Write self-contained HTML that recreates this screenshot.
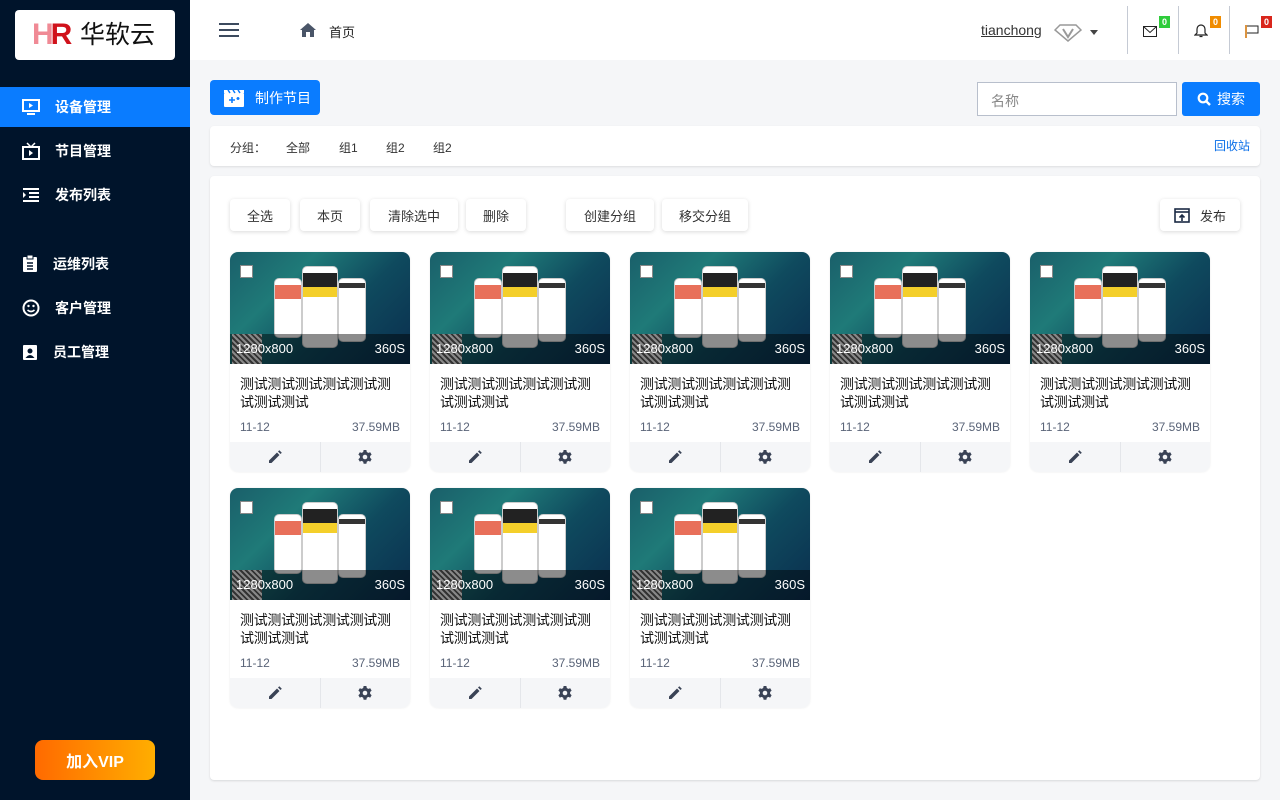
<!DOCTYPE html>
<html><head><meta charset="utf-8">
<style>
*{box-sizing:border-box;margin:0;padding:0}
body{width:1280px;height:800px;overflow:hidden;background:#f5f6f8;font-family:"Liberation Sans","Noto Sans CJK SC",sans-serif;position:relative;color:#222}
.abs{position:absolute}
#side{left:0;top:0;width:190px;height:800px;background:#00142b}
#logo{left:15px;top:10px;width:160px;height:50px;background:#fff;border-radius:4px}
.nav{left:0;width:190px;height:40px;color:#fff;font-size:14px;font-weight:bold;display:flex;align-items:center;padding-left:22px}
.nav svg{margin-right:15px}
.nav.act{background:#0a7cff}
#vip{left:35px;top:740px;width:120px;height:40px;border-radius:8px;background:linear-gradient(90deg,#ff6a00,#ffae00);color:#fff;font-weight:bold;font-size:16px;display:flex;align-items:center;justify-content:center}
#top{left:190px;top:0;width:1090px;height:60px;background:#fff}
.btn{background:#fff;border-radius:4px;box-shadow:0 1px 4px rgba(0,0,0,.15);font-size:13px;color:#333;display:flex;align-items:center;justify-content:center;height:32px;top:199px}
.card{width:180px;height:220px;background:#fff;border-radius:8px;overflow:hidden;box-shadow:0 0 2px rgba(0,0,0,.08)}
.img{height:112px;background:linear-gradient(135deg,#1a5f6a 0%,#1f7a78 30%,#0f4a5e 60%,#0a2e4e 100%);position:relative}
.ph{position:absolute;background:#fff;border-radius:5px;border:1px solid #ccc}
.bar{position:absolute;left:0;right:0;bottom:0;height:30px;background:rgba(0,0,0,.45);color:#fff;font-size:13px}
.chk{position:absolute;left:10px;top:13px;width:13px;height:13px;background:#fff;border:1px solid #888}
.tt{padding:11px 10px 0;font-size:14px;line-height:18px;height:51px;color:#111;letter-spacing:-0.3px}
.meta{display:flex;justify-content:space-between;padding:0 10px;font-size:12px;color:#5a6478;height:27px;line-height:14px;padding-top:5px}
.ft{display:flex;height:30px;background:#f5f6f8}
.ft div{flex:1;display:flex;align-items:center;justify-content:center}
.ft div:first-child{border-right:1px solid #e4e6ea}
.badge{position:absolute;font-size:9px;font-weight:bold;color:#fff;width:11px;height:12px;text-align:center;line-height:12px}
</style></head><body>
<div id="side" class="abs">
 <div id="logo" class="abs">
  <div class="abs" style="left:17px;top:9px;font-size:30px;font-weight:bold;color:#d0121b;letter-spacing:-3px;font-family:'Liberation Sans';line-height:32px"><span style="color:#f08a95">H</span>R</div>
  <div class="abs" style="left:65px;top:10px;font-size:25px;color:#111;line-height:30px">华软云</div>
 </div>
 <div class="nav act abs" style="top:87px"><svg width="18" height="16" viewBox="0 0 18 16"><rect x="1" y="1" width="16" height="11" fill="none" stroke="#fff" stroke-width="2"/><path d="M7 4l4 2.5L7 9z" fill="#fff"/><path d="M5 15h8" stroke="#fff" stroke-width="2"/></svg>设备管理</div>
 <div class="nav abs" style="top:131px"><svg width="18" height="18" viewBox="0 0 18 18"><rect x="1" y="5" width="16" height="12" fill="none" stroke="#fff" stroke-width="2"/><path d="M5 1l4 4 4-4" fill="none" stroke="#fff" stroke-width="1.5"/><path d="M7 8l4 3-4 3z" fill="#fff"/></svg>节目管理</div>
 <div class="nav abs" style="top:175px"><svg width="18" height="16" viewBox="0 0 18 16"><path d="M1 2h16M7 6h10M7 10h10M1 14h16" stroke="#fff" stroke-width="2"/><path d="M1 5l3 3-3 3z" fill="#fff"/></svg>发布列表</div>
 <div class="nav abs" style="top:244px"><svg width="16" height="18" viewBox="0 0 16 18"><rect x="1" y="2" width="14" height="15" rx="1" fill="#fff"/><rect x="5" y="0" width="6" height="4" fill="#fff" stroke="#00142b"/><path d="M5 8h6M5 11h6M5 14h6" stroke="#00142b" stroke-width="1.5"/></svg>运维列表</div>
 <div class="nav abs" style="top:288px"><svg width="18" height="18" viewBox="0 0 18 18"><circle cx="9" cy="9" r="7.5" fill="none" stroke="#fff" stroke-width="2"/><circle cx="6.5" cy="7" r="1.2" fill="#fff"/><circle cx="11.5" cy="7" r="1.2" fill="#fff"/><path d="M5.5 11q3.5 3 7 0" fill="none" stroke="#fff" stroke-width="1.6"/></svg>客户管理</div>
 <div class="nav abs" style="top:332px"><svg width="16" height="18" viewBox="0 0 16 18"><rect x="1" y="2" width="14" height="15" rx="1" fill="#fff"/><circle cx="8" cy="8" r="2.5" fill="#00142b"/><path d="M3.5 15q4.5-6 9 0z" fill="#00142b"/></svg>员工管理</div>
 <div id="vip" class="abs">加入VIP</div>
</div>
<div id="top" class="abs">
 <svg class="abs" style="left:29px;top:22px" width="20" height="16" viewBox="0 0 20 16"><path d="M0 2h20M0 8h20M0 14h20" stroke="#3c4a5e" stroke-width="2"/></svg>
 <svg class="abs" style="left:110px;top:23px" width="16" height="14" viewBox="0 0 16 14"><path d="M8 0L0 7h2v7h4V9h4v5h4V7h2z" fill="#4a5568"/></svg>
 <div class="abs" style="left:139px;top:22px;font-size:13px">首页</div>
 <div class="abs" style="left:791px;top:22px;font-size:14px;color:#333;text-decoration:underline">tianchong</div>
 <svg class="abs" style="left:864px;top:24px" width="28" height="18" viewBox="0 0 28 18"><path d="M6 1h16l5 5-13 11L1 6z" fill="none" stroke="#999" stroke-width="1.5"/><path d="M9 5l5 8 5-8" fill="none" stroke="#999" stroke-width="2"/></svg>
 <svg class="abs" style="left:900px;top:30px" width="8" height="5"><path d="M0 0h8L4 5z" fill="#444"/></svg>
 <div class="abs" style="left:937px;top:6px;width:1px;height:48px;background:#c5cad4"></div>
 <div class="abs" style="left:988px;top:6px;width:1px;height:48px;background:#c5cad4"></div>
 <div class="abs" style="left:1039px;top:6px;width:1px;height:48px;background:#c5cad4"></div>
 <svg class="abs" style="left:953px;top:26px" width="14" height="11" viewBox="0 0 14 11"><rect x=".5" y=".5" width="13" height="10" fill="none" stroke="#222"/><path d="M.5 .5l6.5 6 6.5-6" fill="none" stroke="#222"/></svg>
 <div class="badge" style="left:969px;top:16px;background:#2fcc3b">0</div>
 <svg class="abs" style="left:1004px;top:24px" width="14" height="14" viewBox="0 0 14 14"><path d="M7 1a4 4 0 0 0-4 4v4l-2 2h12l-2-2V5a4 4 0 0 0-4-4zM5.5 12.5h3" fill="none" stroke="#222" stroke-width="1.2"/></svg>
 <div class="badge" style="left:1020px;top:16px;background:#f08c00">0</div>
 <svg class="abs" style="left:1055px;top:25px" width="14" height="13" viewBox="0 0 14 13"><path d="M1 0v13" stroke="#d07000" stroke-width="1.5"/><path d="M2 1h11v7H2" fill="none" stroke="#222"/></svg>
 <div class="badge" style="left:1071px;top:16px;background:#d9261c">0</div>
</div>
<div class="abs" style="left:210px;top:80px;width:110px;height:35px;background:#0a7cff;border-radius:4px;color:#fff;font-size:14px;display:flex;align-items:center;padding-left:13px">
 <svg width="22" height="18" viewBox="0 0 22 18" style="margin-right:10px"><rect x="1" y="4" width="20" height="14" rx="1" fill="#fff"/><path d="M1 1h20v3H1z" fill="#fff"/><path d="M5 1l2 3M10 1l2 3M15 1l2 3" stroke="#0a7cff" stroke-width="1.5"/><path d="M6 11h6M9 8v6M15 8v3M13.5 9.5h3" stroke="#0a7cff" stroke-width="1.6"/></svg>制作节目</div>
<div class="abs" style="left:977px;top:82px;width:200px;height:34px;background:#fff;border:1px solid #b8bfcc;font-size:14px;color:#888;padding:8px 13px">名称</div>
<div class="abs" style="left:1182px;top:82px;width:78px;height:34px;background:#0a7cff;border-radius:3px;color:#fff;font-size:14px;display:flex;align-items:center;justify-content:center"><svg width="14" height="14" viewBox="0 0 14 14" style="margin-right:6px"><circle cx="6" cy="6" r="4.3" fill="none" stroke="#fff" stroke-width="2.2"/><path d="M9 9l4 4" stroke="#fff" stroke-width="2.4"/></svg>搜索</div>
<div class="abs" style="left:210px;top:126px;width:1050px;height:40px;background:#fff;border-radius:4px;box-shadow:0 1px 2px rgba(0,0,0,.1);font-size:12px;color:#333">
 <span class="abs" style="left:20px;top:13px">分组：</span><span class="abs" style="left:76px;top:13px">全部</span><span class="abs" style="left:129px;top:13px">组1</span><span class="abs" style="left:176px;top:13px">组2</span><span class="abs" style="left:223px;top:13px">组2</span>
 <span class="abs" style="left:1004px;top:11px;color:#0a6fe8">回收站</span>
</div>
<div class="abs" style="left:210px;top:176px;width:1050px;height:604px;background:#fff;border-radius:4px;box-shadow:0 1px 2px rgba(0,0,0,.12)"></div>
<div class="btn abs" style="left:230px;width:60px">全选</div>
<div class="btn abs" style="left:300px;width:60px">本页</div>
<div class="btn abs" style="left:370px;width:88px">清除选中</div>
<div class="btn abs" style="left:466px;width:60px">删除</div>
<div class="btn abs" style="left:566px;width:88px">创建分组</div>
<div class="btn abs" style="left:662px;width:86px">移交分组</div>
<div class="btn abs" style="left:1160px;width:80px"><svg width="16" height="15" viewBox="0 0 16 15" style="margin-right:10px"><rect x="1" y="1" width="14" height="13" fill="none" stroke="#1b2a44" stroke-width="1.6"/><path d="M1 4h14" stroke="#1b2a44" stroke-width="1.6"/><path d="M8 13V7M5.5 9.5L8 7l2.5 2.5" fill="none" stroke="#1b2a44" stroke-width="1.6"/></svg>发布</div>
<div id="cards"></div>
<script>
var h='';var pos=[[230,252],[430,252],[630,252],[830,252],[1030,252],[230,488],[430,488],[630,488]];
pos.forEach(function(p){h+='<div class="card abs" style="left:'+p[0]+'px;top:'+p[1]+'px"><div class="img">'+
'<div class="ph" style="left:44px;top:26px;width:28px;height:60px"><div style="height:14px;background:#e8705a;margin-top:6px"></div></div>'+
'<div class="ph" style="left:72px;top:14px;width:36px;height:82px"><div style="height:14px;background:#222;margin-top:6px"></div><div style="height:10px;background:#f4cf2a"></div></div>'+
'<div class="ph" style="left:108px;top:26px;width:28px;height:64px"><div style="height:5px;background:#333;margin-top:4px"></div></div>'+
'<div class="bar"><div style="position:absolute;left:2px;bottom:0;width:30px;height:30px;background:repeating-linear-gradient(45deg,#888 0 2px,#333 2px 4px)"></div><span style="position:absolute;left:6px;top:7px">1280x800</span><span style="position:absolute;right:5px;top:7px">360S</span></div>'+
'<div class="chk"></div></div><div class="tt">测试测试测试测试测试测试测试测试</div><div class="meta"><span>11-12</span><span>37.59MB</span></div>'+
'<div class="ft"><div><svg width="16" height="16" viewBox="0 0 16 16"><path d="M2 11.5V14h2.5l8-8-2.5-2.5zM11 2.5l2.5 2.5 1.3-1.3-2.5-2.5z" fill="#3a4356"/></svg></div><div><svg width="16" height="16" viewBox="0 0 16 16"><path d="M6.6 1h2.8l.4 2 1.5.9 1.9-.7 1.4 2.4-1.5 1.4v1.8l1.5 1.4-1.4 2.4-1.9-.7-1.5.9-.4 2H6.6l-.4-2-1.5-.9-1.9.7-1.4-2.4 1.5-1.4V7L1.4 5.6l1.4-2.4 1.9.7 1.5-.9z" fill="#3a4356"/><circle cx="8" cy="8" r="2.3" fill="#f5f6f8"/></svg></div></div></div>';});
document.getElementById('cards').innerHTML=h;
</script>
</body></html>
